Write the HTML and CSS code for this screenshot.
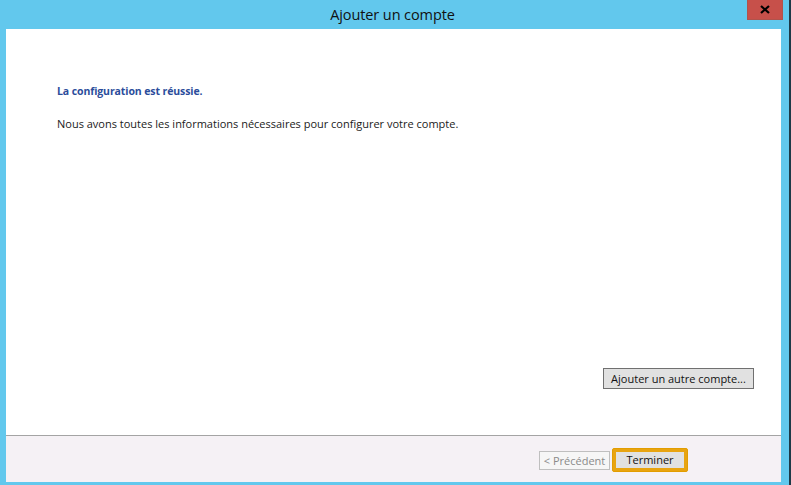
FILE: index.html
```html
<!DOCTYPE html>
<html lang="fr">
<head>
<meta charset="utf-8">
<title>Ajouter un compte</title>
<link rel="stylesheet" href="styles.css">
</head>
<body>
<div class="window">
  <div class="titlebar">
    <span class="title">Ajouter un compte</span>
    <button class="close" aria-label="Fermer">
      <svg width="10" height="9" viewBox="0 0 10 9"><path d="M1 1 L9 8 M9 1 L1 8" stroke="#000" stroke-width="2.2" fill="none"/></svg>
    </button>
  </div>
  <div class="content">
    <div class="main">
      <div class="text">
        <p class="heading">La configuration est réussie.</p>
        <p class="info">Nous avons toutes les informations nécessaires pour configurer votre compte.</p>
      </div>
      <div class="actions">
        <button class="btn btn-add">Ajouter un autre compte...</button>
      </div>
    </div>
    <div class="footer">
      <button class="btn btn-prev" disabled>&lt; Précédent</button>
      <span class="focus-ring"><button class="btn btn-finish">Terminer</button></span>
    </div>
  </div>
</div>
</body>
</html>
```
FILE: styles.css
```css
html, body {
  margin: 0;
  padding: 0;
  background: #1d3a48;
  width: 791px;
  height: 485px;
  overflow: hidden;
}
.window {
  width: 789px;
  height: 485px;
  box-sizing: border-box;
  background: #62c8ed;
  padding: 0 8px 3px 6px;
  display: flex;
  flex-direction: column;
  position: relative;
  font-family: "Open Sans", "Noto Sans", sans-serif;
}
.titlebar {
  height: 29px;
  display: flex;
  align-items: center;
  justify-content: center;
}
.title {
  font-size: 14.5px;
  letter-spacing: -0.1px;
  color: #111;
  margin-top: -1px;
  margin-left: -2px;
}
.close {
  position: absolute;
  top: 0;
  right: 6px;
  width: 36px;
  height: 20px;
  border: 1px solid #b0534c;
  border-top: none;
  background: #c7504a;
  padding: 0;
  display: flex;
  align-items: center;
  justify-content: center;
}
.content {
  flex: 1;
  background: #fff;
  display: flex;
  flex-direction: column;
}
.main {
  flex: 1;
  display: flex;
  flex-direction: column;
  justify-content: space-between;
  padding: 0 27px 46px 51px;
}
.text {
  padding-top: 55px;
}
.heading {
  margin: 0;
  font-size: 10.5px;
  letter-spacing: -0.1px;
  font-weight: bold;
  color: #2b4d9b;
  line-height: 15px;
}
.info {
  margin: 17px 0 0;
  font-size: 11px;
  color: #1a1a1a;
  line-height: 15px;
}
.actions {
  display: flex;
  justify-content: flex-end;
}
.btn {
  font-family: "Open Sans", "Noto Sans", sans-serif;
  font-size: 11px;
  box-sizing: border-box;
  padding: 0;
  margin: 0;
}
.btn-add {
  width: 151px;
  height: 21px;
  border: 1px solid #707070;
  background: #e1e1e1;
  color: #111;
}
.footer {
  height: 47px;
  box-sizing: border-box;
  border-top: 1px solid #a4a4a4;
  background: #f5f1f5;
  display: flex;
  align-items: center;
  justify-content: flex-end;
  padding: 2px 93px 0 0;
}
.btn-prev {
  width: 71px;
  height: 19px;
  border: 1px solid #bfbfbf;
  background: #f6f6f6;
  color: #8a8a8a;
  margin-right: 2px;
}
.focus-ring {
  display: flex;
  padding: 3px;
  border: 1px solid #e29d00;
  background: #e8a410;
  border-radius: 2px;
}
.btn-finish {
  width: 68px;
  height: 16px;
  border: none;
  background: #e1e1e1;
  color: #111;
  line-height: 16px;
}
```
